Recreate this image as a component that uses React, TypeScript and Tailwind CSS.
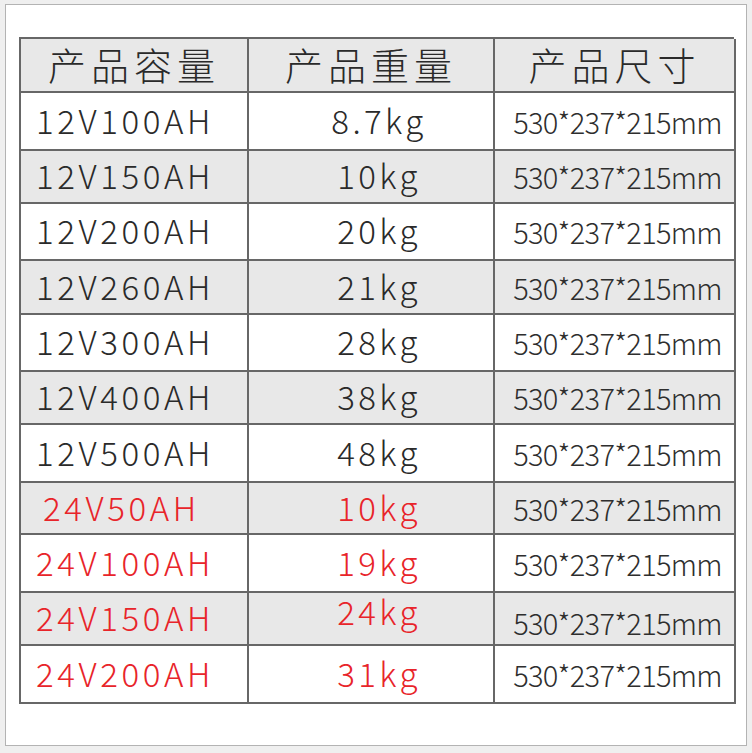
import React from 'react';

type Row = {
  cap: string;
  weight: string;
  red?: boolean;
  h: string;
  capPad?: string;
  wShift?: string;
  sShift?: string;
};

const rows: Row[] = [
  { cap: '12V100AH', weight: '8.7kg', h: 'h-[58px]' },
  { cap: '12V150AH', weight: '10kg', h: 'h-[53px]' },
  { cap: '12V200AH', weight: '20kg', h: 'h-[57px]' },
  { cap: '12V260AH', weight: '21kg', h: 'h-[54px]' },
  { cap: '12V300AH', weight: '28kg', h: 'h-[57px]' },
  { cap: '12V400AH', weight: '38kg', h: 'h-[53px]' },
  { cap: '12V500AH', weight: '48kg', h: 'h-[58px]' },
  { cap: '24V50AH', weight: '10kg', red: true, h: 'h-[52px]', capPad: 'pl-[22px]' },
  { cap: '24V100AH', weight: '19kg', red: true, h: 'h-[58px]' },
  { cap: '24V150AH', weight: '24kg', red: true, h: 'h-[53px]', wShift: '-translate-y-[6px]', sShift: 'translate-y-[4px]' },
  { cap: '24V200AH', weight: '31kg', red: true, h: 'h-[58px]' },
];

const cell = 'border-r-2 border-b-2 border-[#676767]';

export default function App() {
  return (
    <div className="w-[752px] h-[753px] bg-[#efefef] pt-[4px] pl-[5px] font-['Noto_Sans_CJK_SC','Noto_Sans',sans-serif]">
      <div className="w-[742px] h-[742px] bg-white border border-[#b3b3b3] pt-[32px] pl-[13px]">
        <div className="w-[715px] border-l-2 border-t-2 border-[#676767]">
          {/* Header */}
          <div className="grid grid-cols-[228px_246px_241px] h-[54px] bg-[#e8e8e8] text-[#2a2a2a]">
            {['产品容量', '产品重量', '产品尺寸'].map((t) => (
              <div
                key={t}
                className={`flex items-center justify-center pb-[2px] ${cell} text-[38px] font-light tracking-[5px] leading-none`}
              >
                {t}
              </div>
            ))}
          </div>

          {/* Rows */}
          {rows.map((r, i) => (
            <div
              key={r.cap}
              className={`grid grid-cols-[228px_246px_241px] ${r.h} ${i % 2 === 1 ? 'bg-[#e8e8e8]' : 'bg-white'}`}
            >
              <div
                className={`flex items-center pb-[2px] ${r.capPad ?? 'pl-[15px]'} ${cell} text-[33px] font-light tracking-[3.6px] leading-none ${r.red ? 'text-[#e8242a]' : 'text-[#2a2a2a]'}`}
              >
                {r.cap}
              </div>
              <div
                className={`flex items-center justify-center pb-[2px] pl-[16px] ${cell} text-[33px] font-light tracking-[3.4px] leading-none ${r.red ? 'text-[#e8242a]' : 'text-[#2a2a2a]'}`}
              >
                <span className={r.wShift ?? ''}>{r.weight}</span>
              </div>
              <div className={`flex items-center justify-center pl-[6px] ${cell} text-[29px] font-light text-[#2e2e2e] leading-none tracking-[-0.7px]`}>
                <span className={r.sShift ?? ''}>530*237*215mm</span>
              </div>
            </div>
          ))}
        </div>
      </div>
    </div>
  );
}
